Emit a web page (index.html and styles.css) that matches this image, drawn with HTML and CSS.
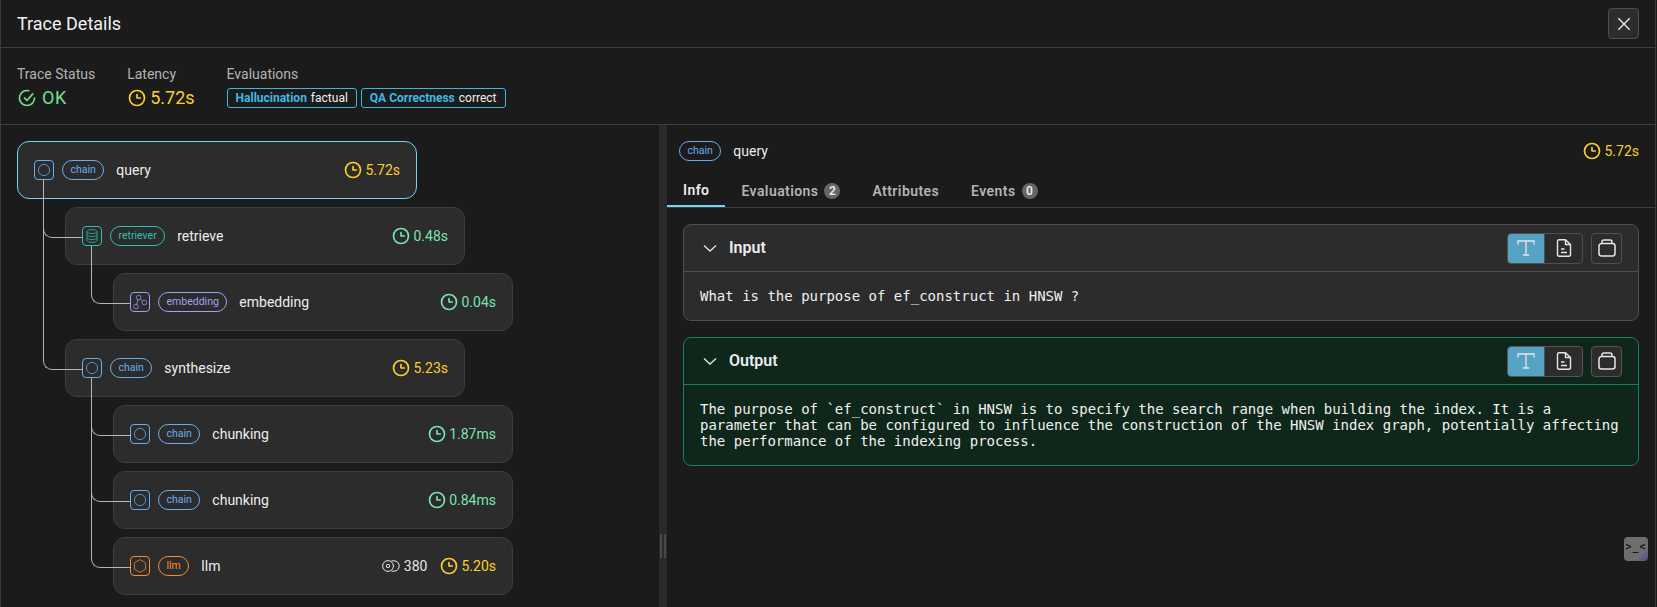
FILE: index.html
```html
<!DOCTYPE html>
<html lang="en">
<head>
  <meta charset="UTF-8" />
  <meta name="viewport" content="width=device-width, initial-scale=1" />
  <title>Trace Details</title>
  <link rel="stylesheet" href="styles.css">
</head>
<body>
  <svg class="sprite" aria-hidden="true">
    <symbol id="i-clock" viewBox="0 0 24 24">
      <path fill="currentColor" d="M12 2a10 10 0 1 0 10 10A10 10 0 0 0 12 2zm0 18a8 8 0 1 1 8-8 8 8 0 0 1-8 8z"/>
      <path fill="currentColor" d="M16 11h-3V8a1 1 0 0 0-2 0v4a1 1 0 0 0 1 1h4a1 1 0 0 0 0-2z"/>
    </symbol>
    <symbol id="i-check" viewBox="0 0 24 24">
      <path fill="currentColor" d="M9.71 11.29a1 1 0 0 0-1.42 1.42l3 3A1 1 0 0 0 12 16a1 1 0 0 0 .72-.34l7-8a1 1 0 0 0-1.5-1.32L12 13.54z"/>
      <path fill="currentColor" d="M21 11a1 1 0 0 0-1 1 8 8 0 0 1-8 8A8 8 0 0 1 6.33 6.36 7.93 7.93 0 0 1 12 4a8.79 8.79 0 0 1 1.9.22 1 1 0 1 0 .47-1.94A10.54 10.54 0 0 0 12 2a10 10 0 0 0-7 17.09A9.93 9.93 0 0 0 12 22a10 10 0 0 0 10-10 1 1 0 0 0-1-1z"/>
    </symbol>
    <symbol id="i-chain" viewBox="0 0 16 16">
      <circle cx="8" cy="8" r="5.6" fill="none" stroke="currentColor" stroke-width="1"/>
    </symbol>
    <symbol id="i-db" viewBox="0 0 16 16">
      <g fill="none" stroke="currentColor" stroke-width="1">
        <ellipse cx="8" cy="3.6" rx="5" ry="2"/>
        <path d="M3 3.6v8.8c0 1.1 2.2 2 5 2s5-.9 5-2V3.6"/>
        <path d="M3 6.6c0 1.1 2.2 2 5 2s5-.9 5-2"/>
        <path d="M3 9.6c0 1.1 2.2 2 5 2s5-.9 5-2"/>
      </g>
    </symbol>
    <symbol id="i-embed" viewBox="0 0 16 16">
      <g fill="none" stroke="currentColor" stroke-width="1">
        <circle cx="6.6" cy="3.6" r="2.3"/>
        <circle cx="12.4" cy="8.6" r="2.3"/>
        <circle cx="4" cy="12.6" r="2.3"/>
        <path d="M8.3 5.2l2.4 2M6 5.8l-1.3 4.6"/>
      </g>
    </symbol>
    <symbol id="i-llm" viewBox="0 0 16 16">
      <path fill="none" stroke="currentColor" stroke-width="1" d="M8 1.6l5.6 3.2v6.4L8 14.4l-5.6-3.2V4.8z"/>
    </symbol>
    <symbol id="i-token" viewBox="0 0 18 12">
      <g fill="none" stroke="currentColor" stroke-width="1">
        <circle cx="6" cy="6" r="5.4"/>
        <circle cx="6" cy="6" r="1.7"/>
        <path d="M9.5 .8h2.5a5.2 5.2 0 0 1 0 10.4H9.5"/>
      </g>
    </symbol>
    <symbol id="i-text" viewBox="0 0 20 20">
      <path fill="none" stroke="currentColor" stroke-width="1.3" d="M2 6.5V3h16v3.5M10 3v14M6.8 17h6.4"/>
    </symbol>
    <symbol id="i-file" viewBox="0 0 20 20">
      <path fill="none" stroke="currentColor" stroke-width="1.4" stroke-linejoin="round" d="M5 1.7h6.500l5 4.800v10a1.800 1.800 0 0 1-1.800 1.800H5.300a1.800 1.800 0 0 1-1.800-1.800V3.200A1.500 1.500 0 0 1 5 1.700zM11.500 1.700v4.800h5M7 11h3.500M7 14.500h6"/>
    </symbol>
    <symbol id="i-copy" viewBox="0 0 20 20">
      <path fill="none" stroke="currentColor" stroke-width="1.5" d="M4.500 5.500h11a2.500 2.500 0 0 1 2.500 2.500v7.500a2.500 2.500 0 0 1-2.500 2.500h-11A2.500 2.500 0 0 1 2 15.500V8a2.500 2.500 0 0 1 2.500-2.500zM5 5.500V4a2 2 0 0 1 2-2h6a2 2 0 0 1 2 2v1.500"/>
    </symbol>
  </svg>

  <div class="dialog">
    <header class="dialog-head">
      <h1>Trace Details</h1>
      <button class="icon-btn" aria-label="Close">
        <svg class="close-icon" viewBox="0 0 20 20"><path d="M4.3 4.3l11.4 11.4M15.7 4.3L4.3 15.7"/></svg>
      </button>
    </header>

    <section class="summary">
      <div class="stat">
        <span class="stat-label">Trace Status</span>
        <span class="stat-value ok"><svg class="ic"><use href="#i-check"/></svg>OK</span>
      </div>
      <div class="stat">
        <span class="stat-label">Latency</span>
        <span class="stat-value slow"><svg class="ic"><use href="#i-clock"/></svg>5.72s</span>
      </div>
      <div class="stat">
        <span class="stat-label">Evaluations</span>
        <div class="evals">
          <span class="eval"><b>Hallucination</b>factual</span>
          <span class="eval"><b>QA Correctness</b>correct</span>
        </div>
      </div>
    </section>

    <div class="main">
      <div class="tree-pane">
        <ul class="tree">
          <li>
            <div class="span-card selected">
              <span class="kind-icon chain"><svg><use href="#i-chain"/></svg></span>
              <span class="pill chain">chain</span>
              <span class="span-name">query</span>
              <span class="span-meta"><span class="time slow"><svg class="ic"><use href="#i-clock"/></svg>5.72s</span></span>
            </div>
            <ul class="children">
              <li>
                <div class="span-card">
                  <span class="kind-icon retriever"><svg><use href="#i-db"/></svg></span>
                  <span class="pill retriever">retriever</span>
                  <span class="span-name">retrieve</span>
                  <span class="span-meta"><span class="time fast"><svg class="ic"><use href="#i-clock"/></svg>0.48s</span></span>
                </div>
                <ul class="children">
                  <li>
                    <div class="span-card">
                      <span class="kind-icon embedding"><svg><use href="#i-embed"/></svg></span>
                      <span class="pill embedding">embedding</span>
                      <span class="span-name">embedding</span>
                      <span class="span-meta"><span class="time fast"><svg class="ic"><use href="#i-clock"/></svg>0.04s</span></span>
                    </div>
                  </li>
                </ul>
              </li>
              <li>
                <div class="span-card">
                  <span class="kind-icon chain"><svg><use href="#i-chain"/></svg></span>
                  <span class="pill chain">chain</span>
                  <span class="span-name">synthesize</span>
                  <span class="span-meta"><span class="time slow"><svg class="ic"><use href="#i-clock"/></svg>5.23s</span></span>
                </div>
                <ul class="children">
                  <li>
                    <div class="span-card">
                      <span class="kind-icon chain"><svg><use href="#i-chain"/></svg></span>
                      <span class="pill chain">chain</span>
                      <span class="span-name">chunking</span>
                      <span class="span-meta"><span class="time fast"><svg class="ic"><use href="#i-clock"/></svg>1.87ms</span></span>
                    </div>
                  </li>
                  <li>
                    <div class="span-card">
                      <span class="kind-icon chain"><svg><use href="#i-chain"/></svg></span>
                      <span class="pill chain">chain</span>
                      <span class="span-name">chunking</span>
                      <span class="span-meta"><span class="time fast"><svg class="ic"><use href="#i-clock"/></svg>0.84ms</span></span>
                    </div>
                  </li>
                  <li>
                    <div class="span-card">
                      <span class="kind-icon llm"><svg><use href="#i-llm"/></svg></span>
                      <span class="pill llm">llm</span>
                      <span class="span-name">llm</span>
                      <span class="span-meta">
                        <span class="tokens"><svg class="token-icon"><use href="#i-token"/></svg>380</span>
                        <span class="time slow"><svg class="ic"><use href="#i-clock"/></svg>5.20s</span>
                      </span>
                    </div>
                  </li>
                </ul>
              </li>
            </ul>
          </li>
        </ul>
      </div>

      <div class="resizer"><span class="grip"></span></div>

      <div class="detail-pane">
        <div class="detail-head">
          <span class="pill chain">chain</span>
          <span class="span-name">query</span>
          <span class="span-meta"><span class="time slow"><svg class="ic"><use href="#i-clock"/></svg>5.72s</span></span>
        </div>
        <nav class="tabs">
          <a class="tab active">Info</a>
          <a class="tab">Evaluations<span class="count">2</span></a>
          <a class="tab">Attributes</a>
          <a class="tab">Events<span class="count">0</span></a>
        </nav>
        <div class="detail-body">
          <section class="io-card">
            <div class="io-head">
              <svg class="chevron" viewBox="0 0 20 20"><path d="M4 7.5l6 5.5 6-5.5"/></svg>
              <h2>Input</h2>
              <div class="io-actions">
                <div class="toggle">
                  <button class="on" aria-label="Text"><svg class="ic"><use href="#i-text"/></svg></button>
                  <button aria-label="Markdown"><svg class="ic"><use href="#i-file"/></svg></button>
                </div>
                <button class="icon-btn" aria-label="Copy"><svg class="ic"><use href="#i-copy"/></svg></button>
              </div>
            </div>
            <pre class="io-text">What is the purpose of ef_construct in HNSW ?</pre>
          </section>

          <section class="io-card output">
            <div class="io-head">
              <svg class="chevron" viewBox="0 0 20 20"><path d="M4 7.5l6 5.5 6-5.5"/></svg>
              <h2>Output</h2>
              <div class="io-actions">
                <div class="toggle">
                  <button class="on" aria-label="Text"><svg class="ic"><use href="#i-text"/></svg></button>
                  <button aria-label="Markdown"><svg class="ic"><use href="#i-file"/></svg></button>
                </div>
                <button class="icon-btn" aria-label="Copy"><svg class="ic"><use href="#i-copy"/></svg></button>
              </div>
            </div>
            <pre class="io-text">The purpose of `ef_construct` in HNSW is to specify the search range when building the index. It is a parameter that can be configured to influence the construction of the HNSW index graph, potentially affecting the performance of the indexing process.</pre>
          </section>
        </div>
      </div>
    </div>
  </div>

  <div class="helper">&gt;_&lt;</div>
</body>
</html>
```

FILE: styles.css
```css
* {
  box-sizing: border-box;
}

html, body {
  height: 100%;
}

body {
  margin: 0;
  background: #1b1b1b;
  color: #e6e6e6;
  font-family: Roboto, "Liberation Sans", sans-serif;
  font-size: 14px;
  line-height: 20px;
  overflow: hidden;
}

.sprite {
  display: none;
}

ul {
  list-style: none;
  margin: 0;
  padding: 0;
}

.ic {
  width: 20px;
  height: 20px;
  flex: none;
}

/* Dialog frame */
.dialog {
  width: 1656px;
  height: 607px;
  display: flex;
  flex-direction: column;
  background: #1b1b1b;
  border-left: 1px solid #3a3a3a;
  border-right: 1px solid #3a3a3a;
}

.dialog-head {
  display: flex;
  align-items: center;
  justify-content: space-between;
  height: 48px;
  padding: 0 16px;
  border-bottom: 1px solid #3d3d3d;
}

.dialog-head h1 {
  margin: 0;
  font-size: 18px;
  font-weight: 400;
  color: #f0f0f0;
}

.icon-btn {
  display: flex;
  align-items: center;
  justify-content: center;
  width: 31px;
  height: 31px;
  padding: 0;
  background: #2c2c2c;
  border: 1px solid #4f4f4f;
  border-radius: 4px;
  color: #e6e6e6;
}

.close-icon {
  width: 20px;
  height: 20px;
  fill: none;
  stroke: currentColor;
  stroke-width: 1.4;
}

/* Summary row */
.summary {
  display: flex;
  gap: 32px;
  height: 77px;
  padding: 16px;
  border-bottom: 1px solid #3d3d3d;
}

.stat {
  display: flex;
  flex-direction: column;
  gap: 4px;
}

.stat-label {
  color: #b3b3b3;
}

.stat-value {
  display: flex;
  align-items: center;
  gap: 3px;
  font-size: 18px;
  font-weight: 400;
}

.stat-value.ok {
  gap: 5px;
  letter-spacing: .5px;
}

.ok {
  color: #72e08a;
}

.slow {
  color: #fad02c;
}

.fast {
  color: #7ae3b3;
}

.evals {
  display: flex;
  gap: 4px;
}

.eval {
  display: flex;
  align-items: center;
  gap: 4px;
  height: 20px;
  padding: 0 8px;
  border: 1px solid #3fb4dc;
  border-radius: 3px;
  font-size: 12px;
  color: #f0f0f0;
}

.eval b {
  color: #3fb9e4;
  font-weight: 700;
}

/* Main split */
.main {
  flex: 1;
  display: flex;
  min-height: 0;
}

.tree-pane {
  width: 658px;
  flex: none;
  padding: 16px;
}

.resizer {
  width: 8px;
  flex: none;
  display: flex;
  align-items: flex-end;
  justify-content: center;
  padding-bottom: 49px;
  background: #2a2a2a;
}

.grip {
  width: 6px;
  height: 24px;
  border-left: 2px solid #4a4a4a;
  border-right: 2px solid #4a4a4a;
}

/* Span tree */
.children {
  margin-top: 8px;
  padding-left: 48px;
  display: flex;
  flex-direction: column;
  gap: 8px;
}

.children > li {
  position: relative;
}

/* elbow from the parent's icon to this card */
.children > li::before {
  content: "";
  position: absolute;
  left: -22px;
  top: -27px;
  width: 39px;
  height: 57px;
  border-left: 1px solid #b5b5b5;
  border-bottom: 1px solid #b5b5b5;
  border-bottom-left-radius: 9px;
}

/* trunk running on to the next sibling */
.children > li:not(:last-child)::after {
  content: "";
  position: absolute;
  left: -22px;
  top: 0;
  bottom: -8px;
  border-left: 1px solid #b5b5b5;
}

.span-card {
  display: flex;
  align-items: center;
  gap: 8px;
  width: 400px;
  height: 58px;
  padding: 0 16px;
  background: #2c2c2c;
  border: 1px solid #3d3d3d;
  border-radius: 12px;
}

.span-card.selected {
  border-color: #72d4f7;
}

.kind-icon {
  display: flex;
  align-items: center;
  justify-content: center;
  width: 20px;
  height: 20px;
  flex: none;
  border: 1px solid;
  border-radius: 4px;
}

.kind-icon svg {
  width: 16px;
  height: 16px;
  opacity: .75;
}

.pill {
  display: inline-flex;
  align-items: center;
  height: 20px;
  padding: 0 7.5px;
  border: 1px solid;
  border-radius: 10px;
  font-size: 10.5px;
}

.chain {
  color: #68aeee;
}

.retriever {
  color: #2fbdb4;
}

.embedding {
  color: #a0a2f5;
}

.llm {
  color: #f08e38;
}

.span-name {
  margin-left: 4px;
  color: #ececec;
}

.span-meta {
  margin-left: auto;
  display: flex;
  align-items: center;
  gap: 12px;
}

.time, .tokens {
  display: flex;
  align-items: center;
  gap: 2px;
}

.tokens {
  gap: 4px;
}

.token-icon {
  width: 18px;
  height: 12px;
}

/* Detail pane */
.detail-pane {
  flex: 1;
  min-width: 0;
}

.detail-head {
  display: flex;
  align-items: center;
  gap: 8px;
  height: 48px;
  padding: 16px 16px 12px 12px;
}

.tabs {
  display: flex;
  height: 35px;
  border-bottom: 1px solid #3d3d3d;
}

.tab {
  display: flex;
  align-items: center;
  gap: 6px;
  height: 34px;
  padding: 2px 16px 0;
  font-weight: 600;
  letter-spacing: .42px;
  color: #b3b3b3;
}

.tab.active {
  color: #ececec;
  border-bottom: 2px solid #72d4f7;
}

.count {
  display: flex;
  align-items: center;
  justify-content: center;
  width: 16px;
  height: 16px;
  border-radius: 50%;
  background: #666;
  color: #eee;
  font-size: 12px;
  letter-spacing: 0;
}

.detail-body {
  display: flex;
  flex-direction: column;
  gap: 16px;
  padding: 16px;
}

.io-card {
  background: #2c2c2c;
  border: 1px solid #4f4f4f;
  border-radius: 8px;
}

.io-head {
  display: flex;
  align-items: center;
  gap: 9px;
  height: 47px;
  padding: 0 16px;
  border-bottom: 1px solid #4f4f4f;
}

.io-head h2 {
  margin: 0;
  font-size: 16px;
  font-weight: 600;
  color: #ececec;
}

.chevron {
  width: 20px;
  height: 20px;
  fill: none;
  stroke: #e6e6e6;
  stroke-width: 1.3;
}

.io-actions {
  margin-left: auto;
  display: flex;
  gap: 8px;
}

.toggle {
  display: flex;
  height: 31px;
  border: 1px solid #4f4f4f;
  border-radius: 4px;
  overflow: hidden;
  background: #2c2c2c;
}

.toggle button {
  display: flex;
  align-items: center;
  justify-content: center;
  width: 37px;
  padding: 0;
  border: none;
  background: none;
  color: #e6e6e6;
}

.toggle button.on {
  background: #56a2c2;
  border-right: 1px solid #4f4f4f;
}

.io-text {
  margin: 0;
  padding: 16px;
  font-family: "DejaVu Sans Mono", monospace;
  font-size: 14px;
  line-height: 16px;
  white-space: pre-wrap;
  color: #f0f0f0;
}

.io-card.output {
  background: #0f271b;
  border-color: #15805a;
}

.output .io-head {
  border-bottom-color: #15805a;
}

.output .icon-btn, .output .toggle {
  border-color: #555;
}

/* Floating helper */
.helper {
  position: fixed;
  left: 1624px;
  top: 537px;
  width: 24px;
  height: 24px;
  border-radius: 4px;
  background: linear-gradient(135deg, #6e6e72 72%, #5a3f98 100%);
  color: #161616;
  font-family: "DejaVu Sans Mono", monospace;
  font-size: 10px;
  font-weight: 700;
  line-height: 20px;
  text-align: center;
  letter-spacing: 1px;
}
```
